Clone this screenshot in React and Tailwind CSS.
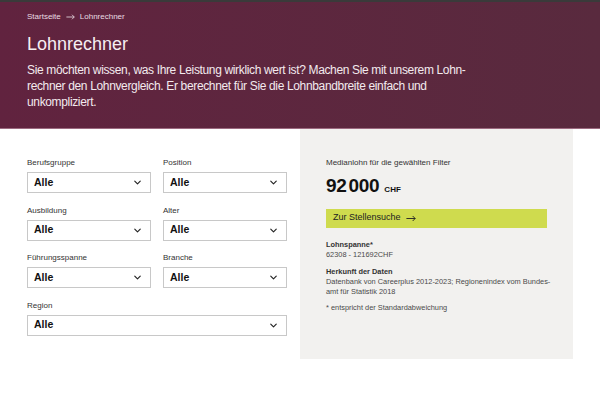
import { ChevronDown } from "lucide-react";

const filters = [
  { label: "Berufsgruppe" },
  { label: "Position" },
  { label: "Ausbildung" },
  { label: "Alter" },
  { label: "Führungsspanne" },
  { label: "Branche" },
  { label: "Region", full: true },
];

const Arrow = ({ className }) => (
  <svg viewBox="0 0 12 8" className={className} fill="none" stroke="currentColor" strokeWidth="1.1">
    <path d="M0.5 4h10.5M8 1l3 3-3 3" />
  </svg>
);

const Select = ({ label, full }) => (
  <div className={full ? "col-span-2" : ""}>
    <div className="text-[8px] leading-[10px] text-[#333] mb-[4px]">{label}</div>
    <div className="h-[21px] border border-[#c8c8c8] bg-white flex items-center justify-between pl-[6px] pr-[7px]">
      <span className="text-[10.5px] font-bold text-[#111]">Alle</span>
      <ChevronDown className="w-[11px] h-[11px] text-[#222]" strokeWidth={2.5} />
    </div>
  </div>
);

export default function App() {
  return (
    <div
      className="w-[600px] h-[415px] bg-white overflow-hidden"
      style={{ fontFamily: '"Liberation Sans", Arial, sans-serif' }}
    >
      <div className="h-[2px] bg-[#3a3a3a]" />
      <header className="h-[127px] bg-gradient-to-r from-[#61233f] to-[#592a3e] border-b border-[#9c6a80] px-[27px] pt-[9px] text-white">
        <nav className="flex items-center gap-[5px] text-[8px] text-[#e8dce2]">
          <span>Startseite</span>
          <Arrow className="w-[9px] h-[6px]" />
          <span>Lohnrechner</span>
        </nav>
        <h1 className="text-[18px] leading-[22px] mt-[10px] text-[#f6eef2]">Lohnrechner</h1>
        <p className="text-[12px] leading-[16px] tracking-[-0.35px] mt-[7px] whitespace-nowrap text-[#f3eaee]">
          Sie möchten wissen, was Ihre Leistung wirklich wert ist? Machen Sie mit unserem Lohn-
          <br />
          rechner den Lohnvergleich. Er berechnet für Sie die Lohnbandbreite einfach und
          <br />
          unkompliziert.
        </p>
      </header>

      <main className="flex pl-[27px] gap-[13px]">
        <div className="w-[260px] pt-[29px] grid grid-cols-2 gap-x-[12px] gap-y-[12.5px] content-start">
          {filters.map((f) => (
            <Select key={f.label} {...f} />
          ))}
        </div>

        <aside className="w-[273px] h-[230px] bg-[#f2f1ef] pl-[26px] pr-[26px] pt-[28px]">
          <div className="text-[8px] text-[#333]">Medianlohn für die gewählten Filter</div>
          <div className="flex items-baseline gap-[5px] mt-[3px]">
            <span className="text-[19px] font-bold text-[#111] tracking-[-0.3px]">
              92<span className="ml-[2px]">000</span>
            </span>
            <span className="text-[8px] font-bold text-[#111]">CHF</span>
          </div>
          <button className="mt-[8px] w-[221px] h-[19px] bg-[#cfdb4e] flex items-center gap-[5px] px-[7px] text-[9px] text-[#222]">
            <span>Zur Stellensuche</span>
            <Arrow className="w-[10px] h-[7px]" />
          </button>
          <div className="mt-[12px] text-[7.4px] leading-[10px] text-[#4a4a4a] whitespace-nowrap">
            <div className="font-bold text-[#333]">Lohnspanne*</div>
            <div>62308 - 121692CHF</div>
            <div className="font-bold text-[#333] mt-[7px]">Herkunft der Daten</div>
            <div>
              Datenbank von Careerplus 2012-2023; Regionenindex vom Bundes-
              <br />
              amt für Statistik 2018
            </div>
            <div className="mt-[6px]">* entspricht der Standardabweichung</div>
          </div>
        </aside>
      </main>
    </div>
  );
}
